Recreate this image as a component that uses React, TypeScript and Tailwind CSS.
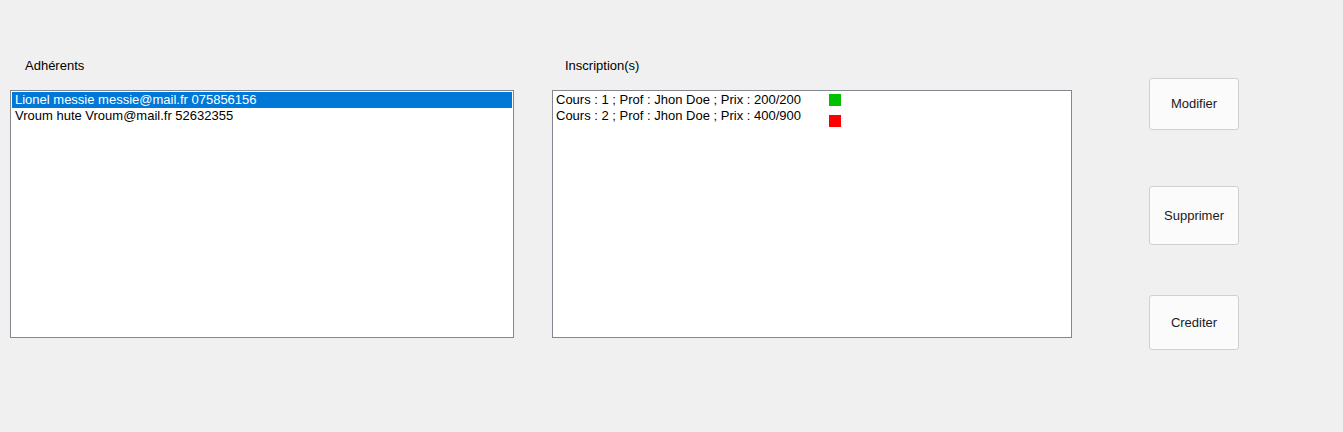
import React from 'react';

const adherents = [
  'Lionel messie messie@mail.fr 075856156',
  'Vroum hute Vroum@mail.fr 52632355',
];

const inscriptions = [
  { label: 'Cours : 1 ; Prof : Jhon Doe ; Prix : 200/200', color: 'bg-[#00c000]', offset: 'mt-[2px]' },
  { label: 'Cours : 2 ; Prof : Jhon Doe ; Prix : 400/900', color: 'bg-[#ff0000]', offset: 'mt-[7px]' },
];

const font = { fontFamily: '"Liberation Sans", "Noto Sans", sans-serif' };

function Button({ children, className = '' }: { children: React.ReactNode; className?: string }) {
  return (
    <button className={`w-[90px] bg-[#fbfbfb] border border-[#d0d0d0] rounded-[3px] text-[13px] text-[#1a1a1a] ${className}`}>
      {children}
    </button>
  );
}

export default function App() {
  const selected = 0;
  return (
    <div className="w-[1343px] h-[432px] bg-[#f0f0f0] flex items-start" style={font}>
      <div className="ml-[10px] mt-[57px] w-[504px] flex flex-col">
        <div className="pl-[15px] h-[18px] text-[13px] leading-[18px] text-black">Adhérents</div>
        <div className="mt-[15px] h-[248px] bg-white border border-[#828790] pt-[1px] px-[1px]">
          {adherents.map((a, i) => (
            <div key={a}
              className={`h-[16px] pl-[3px] text-[13px] leading-[16px] whitespace-nowrap ${i === selected ? 'bg-[#0078d7] text-white' : 'text-black'}`}>
              {a}
            </div>
          ))}
        </div>
      </div>

      <div className="ml-[38px] mt-[57px] w-[520px] flex flex-col">
        <div className="pl-[13px] h-[18px] text-[13px] leading-[18px] text-black">Inscription(s)</div>
        <div className="mt-[15px] h-[248px] bg-white border border-[#828790] pt-[1px] pl-[3px]">
          {inscriptions.map(r => (
            <div key={r.label} className="flex items-start h-[16px]">
              <span className="w-[273px] text-[13px] leading-[16px] whitespace-nowrap text-black">{r.label}</span>
              <span className={`w-[12px] h-[12px] ${r.color} ${r.offset}`} />
            </div>
          ))}
        </div>
      </div>

      <div className="ml-[77px] mt-[78px] flex flex-col">
        <Button className="h-[52px]">Modifier</Button>
        <Button className="h-[59px] mt-[56px]">Supprimer</Button>
        <Button className="h-[55px] mt-[50px]">Crediter</Button>
      </div>
    </div>
  );
}
